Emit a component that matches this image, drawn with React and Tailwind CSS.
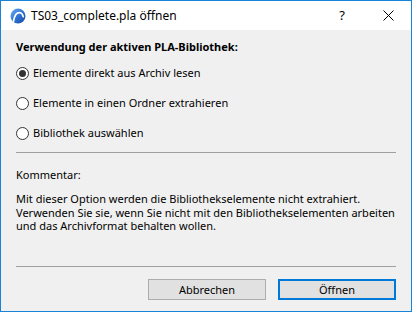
import React, { useState } from "react";

const options = [
    "Elemente direkt aus Archiv lesen",
    "Elemente in einen Ordner extrahieren",
    "Bibliothek auswählen",
];

function AppIcon() {
    return (
        <svg width="16" height="16" viewBox="0 0 16 16">
            <defs>
                <linearGradient id="ac" x1="0" y1="0" x2="1" y2="1">
                    <stop offset="0" stopColor="#6fb0f0" />
                    <stop offset="0.5" stopColor="#2f74d6" />
                    <stop offset="1" stopColor="#1a4aa0" />
                </linearGradient>
            </defs>
            <circle cx="8" cy="8" r="7.5" fill="url(#ac)" />
            <path
                d="M3.6 13.2 C4.4 7.5 6.8 4.6 9.4 4.6 C11.4 4.6 12.6 6.2 13.2 8.6"
                fill="none"
                stroke="#fff"
                strokeWidth="1.7"
                strokeLinecap="round"
            />
        </svg>
    );
}

function Radio({ checked }) {
    return (
        <span className="w-[13px] h-[13px] rounded-full border border-[#333333] bg-white flex items-center justify-center shrink-0">
            {checked && (
                <span className="w-[7px] h-[7px] rounded-full bg-[#333333]" />
            )}
        </span>
    );
}

export default function App() {
    const [selected, setSelected] = useState(0);

    return (
        <div
            className="w-[412px] h-[312px] border border-[#1883d7] bg-[#f0f0f0] flex flex-col text-[11px] text-black"
            style={{ fontFamily: '"Noto Sans", "Liberation Sans", sans-serif' }}
        >
            {/* Titelleiste */}
            <div className="h-[29px] bg-white flex items-center shrink-0">
                <div className="pl-[9px] pr-[5px] flex items-center">
                    <AppIcon />
                </div>
                <span className="text-[12px]">TS03_complete.pla öffnen</span>
                <div className="ml-auto flex items-center h-full">
                    <span className="w-[46px] text-center text-[13px]">?</span>
                    <span className="w-[46px] flex justify-center">
                        <svg width="11" height="11" viewBox="0 0 11 11">
                            <path
                                d="M0.5 0.5 L10.5 10.5 M10.5 0.5 L0.5 10.5"
                                stroke="#000"
                                strokeWidth="1"
                            />
                        </svg>
                    </span>
                </div>
            </div>

            {/* Inhalt */}
            <div className="flex-1 flex flex-col px-[15px] pt-[9px]">
                <div className="font-bold leading-[16px]">
                    Verwendung der aktiven PLA-Bibliothek:
                </div>

                <div className="flex flex-col gap-[14px] mt-[10px]">
                    {options.map((opt, i) => (
                        <label
                            key={opt}
                            onClick={() => setSelected(i)}
                            className="flex items-center gap-[4px] h-[16px] leading-[16px]"
                        >
                            <Radio checked={selected === i} />
                            <span>{opt}</span>
                        </label>
                    ))}
                </div>

                <div className="h-px bg-[#a0a0a0] mt-[11px]" />

                <div className="mt-[14px] leading-[16px]">Kommentar:</div>
                <p className="mt-[9px] leading-[13.5px] whitespace-nowrap">
                    Mit dieser Option werden die Bibliothekselemente nicht
                    extrahiert.
                    <br />
                    Verwenden Sie sie, wenn Sie nicht mit den
                    Bibliothekselementen arbeiten
                    <br />
                    und das Archivformat behalten wollen.
                </p>

                <div className="h-px bg-[#a0a0a0] mt-auto" />

                <div className="flex justify-end gap-[12px] mt-[12px] mb-[11px]">
                    <button className="w-[118px] h-[21px] bg-[#e1e1e1] border border-[#adadad] text-[11px] leading-none">
                        Abbrechen
                    </button>
                    <button className="w-[118px] h-[21px] bg-[#e1e1e1] border-2 border-[#0078d7] text-[11px] leading-none">
                        Öffnen
                    </button>
                </div>
            </div>
        </div>
    );
}
